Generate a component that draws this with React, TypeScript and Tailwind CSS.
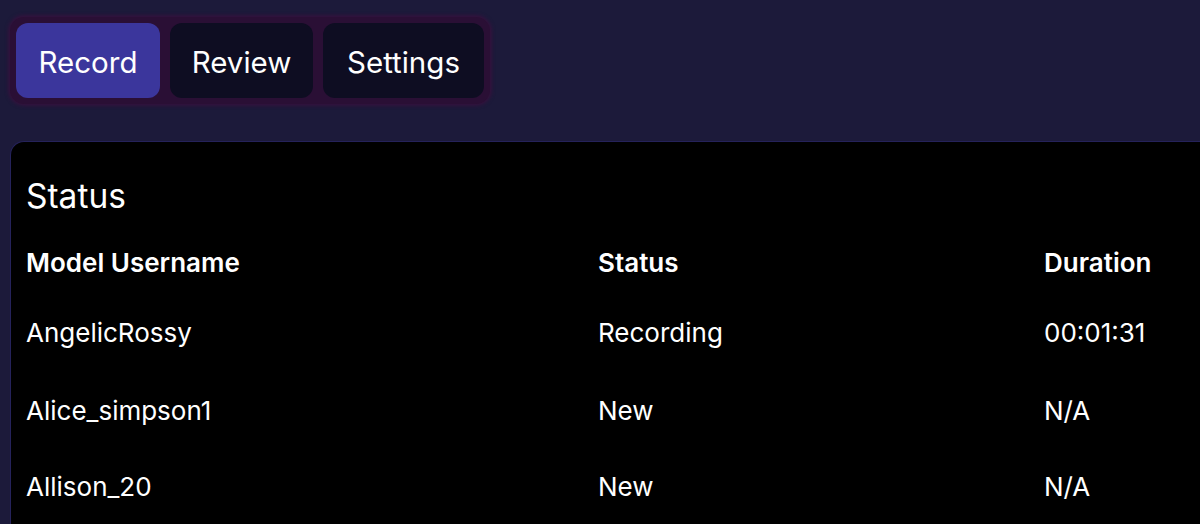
import React from "react";

const rows = [
  { name: "AngelicRossy", status: "Recording", duration: "00:01:31" },
  { name: "Alice_simpson1", status: "New", duration: "N/A" },
  { name: "Allison_20", status: "New", duration: "N/A" },
];

const tabs = [
  { label: "Record", width: "w-[144px]", active: true },
  { label: "Review", width: "w-[143px]", active: false },
  { label: "Settings", width: "w-[161px]", active: false },
];

export default function App() {
  return (
    <div className="h-[524px] overflow-hidden bg-[#1c1a3a] pl-[10px] pt-[17px] font-['Inter',sans-serif] text-white">
      <div className="inline-flex gap-[10px] rounded-[14px] bg-[#2a0f35] p-[6px] shadow-[0_0_4px_1px_#3d0f3e]">
        {tabs.map((tab) => (
          <button
            key={tab.label}
            className={`${tab.width} h-[75px] rounded-[12px] pt-[3px] text-[29.5px] ${
              tab.active ? "bg-[#3b369c]" : "bg-[#0e0d22]"
            }`}
          >
            {tab.label}
          </button>
        ))}
      </div>

      <div className="mt-[37px] w-[1210px] rounded-tl-[14px] border-l border-t border-[#25225a] bg-black pl-[15px] pt-[34px] pb-[40px]">
        <h2 className="text-[33.5px] leading-[40px]">Status</h2>
        <div className="mt-[27px] grid grid-cols-[572px_446px_1fr] text-[26px] font-semibold leading-[40px]">
          <div>Model Username</div>
          <div>Status</div>
          <div>Duration</div>
        </div>
        {rows.map((row, i) => (
          <div
            key={row.name}
            className={`grid grid-cols-[572px_446px_1fr] text-[26px] leading-[40px] ${
              i === 0 ? "mt-[30px]" : i === 1 ? "mt-[38px]" : "mt-[36px]"
            }`}
          >
            <div>{row.name}</div>
            <div>{row.status}</div>
            <div>{row.duration}</div>
          </div>
        ))}
      </div>
    </div>
  );
}
